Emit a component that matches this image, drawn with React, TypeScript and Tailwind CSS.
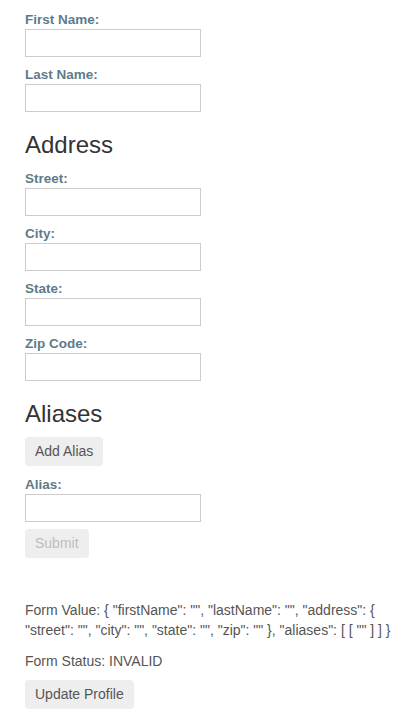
type FieldProps = {
  label: string;
  className?: string;
};

function Field({ label, className = "" }: FieldProps) {
  return (
    <div className={`flex flex-col ${className}`}>
      <label className="block h-[16px] text-[13.5px] leading-[16px] font-bold text-[#5f7b89]">
        {label}
      </label>
      <input
        type="text"
        className="mt-[1px] h-[28px] w-[176px] border border-[#cccccc] bg-white outline-none"
      />
    </div>
  );
}

const formValue =
  'Form Value: { "firstName": "", "lastName": "", "address": { "street": "", "city": "", "state": "", "zip": "" }, "aliases": [ [ "" ] ] }';

export default function App() {
  return (
    <div className="min-h-[722px] bg-white pl-[25px] pr-[15px] pt-[12px] font-['Liberation_Sans',Arial,sans-serif]">
      <form className="flex flex-col items-start">
        <Field label="First Name:" />
        <Field label="Last Name:" className="mt-[10px]" />

        <h2 className="mt-[19px] h-[28px] text-[24px] leading-[28px] text-[#333333]">
          Address
        </h2>
        <Field label="Street:" className="mt-[12px]" />
        <Field label="City:" className="mt-[10px]" />
        <Field label="State:" className="mt-[10px]" />
        <Field label="Zip Code:" className="mt-[10px]" />

        <h2 className="mt-[19px] h-[28px] text-[24px] leading-[28px] text-[#333333]">
          Aliases
        </h2>
        <button
          type="button"
          className="mt-[9px] h-[29px] rounded-[4px] bg-[#eeeeee] px-[10px] text-[14px] leading-[17px] text-[#555555]"
        >
          Add Alias
        </button>
        <Field label="Alias:" className="mt-[11px]" />
        <button
          type="button"
          disabled
          className="mt-[7px] h-[29px] rounded-[4px] bg-[#eeeeee] px-[10px] text-[14px] leading-[17px] text-[#bdbdbd]"
        >
          Submit
        </button>
      </form>

      <p className="mt-[42px] text-[14px] leading-[20px] text-[#555555]">{formValue}</p>
      <p className="mt-[11px] text-[14px] leading-[20px] text-[#555555]">Form Status: INVALID</p>
      <button
        type="button"
        className="mt-[9px] h-[29px] rounded-[4px] bg-[#eeeeee] px-[10px] text-[14px] leading-[17px] text-[#555555]"
      >
        Update Profile
      </button>
    </div>
  );
}
